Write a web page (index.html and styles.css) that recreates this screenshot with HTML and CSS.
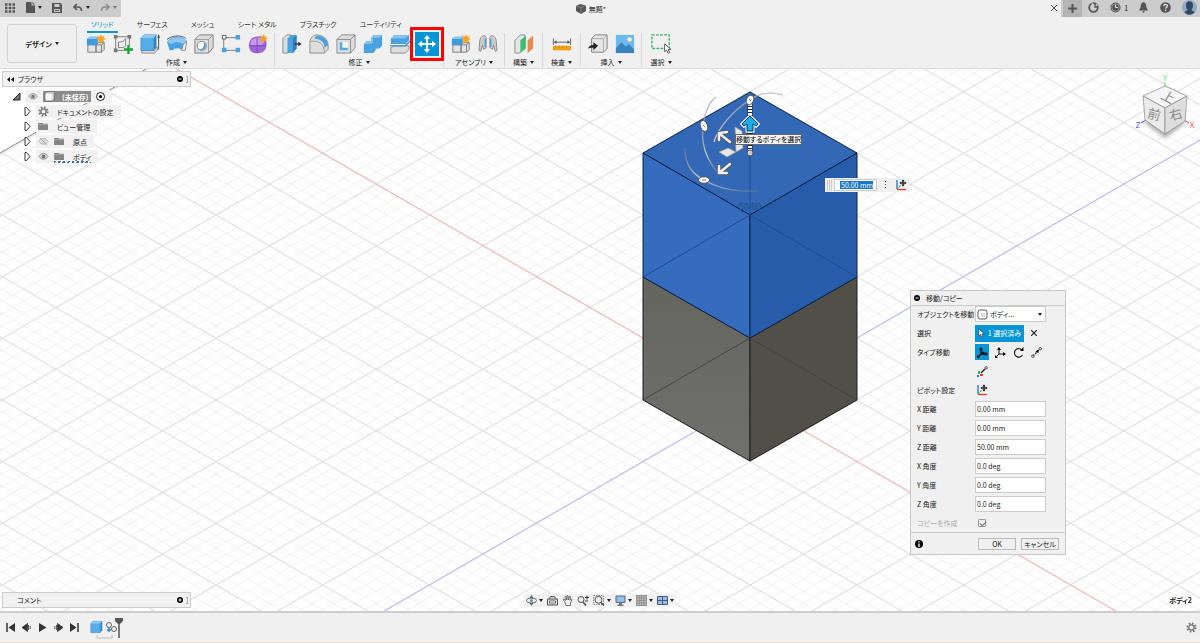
FILE: index.html
```html
<!DOCTYPE html>
<html lang="ja">
<head>
    <meta charset="UTF-8">
    <meta name="viewport" content="width=device-width, initial-scale=1.0">
    <title>無題*</title>
    <link rel="stylesheet" href="styles.css">
</head>
<body>
    <!-- shared icons -->
    <svg class="sprite" width="0" height="0" aria-hidden="true">
        <symbol id="star" viewBox="0 0 12 12"><path d="M6 0l1.200 3.200L10.500 1.500 8.800 4.800 12 6 8.800 7.200l1.700 3.300-3.300-1.700L6 12 4.800 8.800 1.500 10.500l1.700-3.300L0 6l3.200-1.200L1.500 1.500l3.300 1.700z" fill="#f6a21b"/></symbol>
        <symbol id="i-component" viewBox="0 0 22 22">
            <path d="M2 12h9v8H2zM11 12l3-2.500h6V17l-3 3h-6z" fill="#e4e4e4" stroke="#777"/>
            <path d="M11 12h6v8M17 12l3-2.500" fill="none" stroke="#777"/>
            <path d="M1 5.500L4 3h9v6.500L11 12H1z" fill="#3d9ae0"/><path d="M1 5.500L4 3h9l-2 2.500z" fill="#85c8f3"/>
            <use href="#star" x="11" y="0" width="11" height="11"/>
        </symbol>
        <symbol id="i-body" viewBox="0 0 20 22">
            <path d="M1 5.500L5 2h14l-3 3.500V20H1z" fill="#56aee9" stroke="#2b7ab8" stroke-width=".6"/>
            <path d="M1 5.500L5 2h14l-3 3.500z" fill="#8ccbf4"/><path d="M16 5.500L19 2v14l-3 4z" fill="#2f82c5"/>
        </symbol>
        <symbol id="i-folder" viewBox="0 0 12 10"><path d="M0 1h5l1 1h5v7H0z" fill="#858585"/><path d="M0 3h11" stroke="#b5b5b5" stroke-width=".7"/></symbol>
        <symbol id="i-eye" viewBox="0 0 12 10"><path d="M1 5c2.500-4.500 7.500-4.500 10 0-2.500 4-7.500 4-10 0z" fill="#ddd" stroke="#888"/><circle cx="6" cy="5" r="2.200" fill="#777"/></symbol>
        <symbol id="i-gear" viewBox="0 0 14 14"><circle cx="7" cy="7" r="5" fill="none" stroke="#777" stroke-width="3" stroke-dasharray="1.960 1.960"/><circle cx="7" cy="7" r="3.300" fill="#eee" stroke="#777" stroke-width="1.600"/></symbol>
        <symbol id="i-pivot" viewBox="0 0 12 12"><path d="M2 1v9" stroke="#1b6fd0" stroke-width="1.300"/><path d="M2 10.500h9" stroke="#e33" stroke-width="1.300"/><path d="M2 10l4-4" stroke="#3b4" stroke-width="1.300" stroke-dasharray="2 1"/><path d="M8 1.500v5M5.500 4h5" stroke="#111" stroke-width="1.200"/><path d="M8 .5l1.500 1.800h-3zM8 7.500L6.500 5.700h3zM4.500 4l1.800-1.500v3zM11.500 4L9.700 2.500v3z" fill="#111"/></symbol>
        <symbol id="i-cursor" viewBox="0 0 10 14"><path d="M1 1v10l2.500-2 1.800 4 2-1-1.800-3.700L9 8z" fill="#fff" stroke="#333"/></symbol>
        <symbol id="i-doc" viewBox="0 0 12 12"><path d="M1 3l2-2h8v8l-2 2H1z" fill="#f8f8f8" stroke="#666"/><path d="M1 3h8v8M9 3l2-2" fill="none" stroke="#bbb" stroke-width=".7"/></symbol>
        <symbol id="i-plus" viewBox="0 0 10 10"><path d="M5 1v8M1 5h8" stroke="#555" stroke-width="1.800"/></symbol>
    </svg>

    <header class="titlebar">
        <div class="quick">
            <button aria-label="データ パネル"><svg width="10" height="10" viewBox="0 0 10 10"><path d="M0 1.500h10M0 5h10M0 8.500h10" stroke="#555" stroke-width="2.400" stroke-dasharray="2.500 1.250"/></svg></button>
            <button class="drop" aria-label="ファイル"><svg width="9" height="11" viewBox="0 0 9 11"><path d="M0 0h5.500v3.500H9V11H0z" fill="#555"/><path d="M6.500 0L9 2.500H6.500z" fill="#555"/></svg></button>
            <button aria-label="保存"><svg width="10" height="10" viewBox="0 0 10 10"><path d="M0 0h8.500L10 1.500V10H0z" fill="#555"/><path d="M2.500 1h5v3h-5zM2 6h6v3H2z" fill="#ccc"/><path d="M3 7.500h4" stroke="#555"/></svg></button>
            <button class="drop" aria-label="元に戻す"><svg width="10" height="9" viewBox="0 0 10 9"><path d="M4 1L1 4l3 3M1 4h4c2.500 0 3.500 1.500 3.500 4" fill="none" stroke="#555" stroke-width="1.600"/></svg></button>
            <button class="drop faded" aria-label="やり直し"><svg width="10" height="9" viewBox="0 0 10 9"><path d="M6 1l3 3-3 3M9 4H5C2.500 4 1.500 5.500 1.500 8" fill="none" stroke="#555" stroke-width="1.600"/></svg></button>
        </div>
        <div class="doc-tab">
            <svg width="10" height="10" viewBox="0 0 10 10"><path d="M0 2l4-2 6 1.500V7L5 10 0 7z" fill="#555"/><path d="M0 2l5 1.500v6.500M5 3.500l5-2" fill="none" stroke="#999" stroke-width=".7"/></svg>
            <span>無題*</span>
            <button class="close" aria-label="閉じる"><svg width="6" height="6" viewBox="0 0 6 6"><path d="M0 0l6 6M6 0L0 6" stroke="#444"/></svg></button>
        </div>
        <button class="new-tab" aria-label="新規"><svg width="11" height="11"><use href="#i-plus"/></svg></button>
        <div class="account">
            <button aria-label="拡張機能"><svg width="11" height="11" viewBox="0 0 11 11"><circle cx="5.500" cy="5.500" r="4.300" fill="none" stroke="#555" stroke-width="1.800"/><path d="M4 1l2 3 3.500-1.500" fill="none" stroke="#ccc" stroke-width="1.500"/><path d="M7 2v3h3" fill="none" stroke="#555" stroke-width="1.300"/></svg></button>
            <button class="jobs" aria-label="ジョブ ステータス"><svg width="11" height="11" viewBox="0 0 11 11"><circle cx="5.500" cy="5.500" r="5" fill="#555"/><circle cx="5.500" cy="5.500" r="3.800" fill="none" stroke="#aaa" stroke-width=".7"/><path d="M5.500 2.500v3H8" fill="none" stroke="#ddd"/></svg>1</button>
            <button aria-label="通知"><svg width="9" height="11" viewBox="0 0 9 11"><path d="M4.500 0C6.500 1 7.300 2 7.300 5L9 8.500H0L1.700 5c0-3 .8-4 2.800-5zM3 9.300h3L4.500 11z" fill="#555"/></svg></button>
            <button aria-label="ヘルプ"><svg width="11" height="11" viewBox="0 0 11 11"><circle cx="5.500" cy="5.500" r="5.300" fill="#555"/><path d="M3.700 4.200c0-2.400 3.700-2.300 3.700-.2 0 1.300-1.800 1.300-1.800 2.700M5.600 7.800v1.300" fill="none" stroke="#eee" stroke-width="1.200"/></svg></button>
            <button aria-label="アカウント"><svg width="15" height="15" viewBox="0 0 15 15"><circle cx="7.500" cy="7.500" r="7.500" fill="#8fa9c7"/><path d="M4 5c0-5 7-5 7 0 0 3-1 4-1.700 5l3.200 2c-2.500 3.500-7.500 3.500-10 0l3.200-2C5 9 4 8 4 5z" fill="#33475f"/></svg></button>
        </div>
    </header>

    <section class="toolbar">
        <button class="workspace drop">デザイン</button>
        <div class="ribbon">
            <nav class="tabs">
                <a href="#" class="active">ソリッド</a>
                <a href="#">サーフェス</a>
                <a href="#">メッシュ</a>
                <a href="#">シート メタル</a>
                <a href="#">プラスチック</a>
                <a href="#">ユーティリティ</a>
            </nav>
            <div class="groups">
                <div class="group">
                    <div class="tools">
                        <button aria-label="新規コンポーネント"><svg><use href="#i-component"/></svg></button>
                        <button aria-label="スケッチを作成"><svg viewBox="0 0 22 22"><path d="M3 1v18M1 3h19M18 1v12M1 18h11" stroke="#777" fill="none"/><path d="M6 15V9c4 0 6-1 8-4v8c-2 2-4 2-8 2z" fill="none" stroke="#777"/><path d="M1 1h4v4H1zM16 1h4v4h-4zM1 16h4v4H1z" fill="#777"/><path d="M17 12v10M12 17h10" stroke="#1aa33b" stroke-width="2.600"/></svg></button>
                        <button aria-label="押し出し"><svg viewBox="0 0 22 22"><path d="M2 18h14l3-4v4l-3 3H2z" fill="#ddd" stroke="#888"/><use href="#i-body" x="0" y="-1" width="19" height="21"/><path d="M20.500 3v14" stroke="#444"/><path d="M20.500 0l1.500 4h-3z" fill="#444"/></svg></button>
                        <button aria-label="回転"><svg viewBox="0 0 22 22"><path d="M0 9C5 1 16 1 22 8l-3 10h-3c-2-3-7-3-10 0H3z" fill="#4aa2e0"/><path d="M0 9C6 2 16 2 22 8l-5 3C13 8 9 8 5 11z" fill="#8bc9f2"/><path d="M18 11l4-3-2 10h-4z" fill="#eee" stroke="#888"/><path d="M0 6c6-5 16-5 21-1" fill="none" stroke="#555"/></svg></button>
                        <button aria-label="穴"><svg viewBox="0 0 22 22"><path d="M1 6l5-5h15v14l-5 6H1z" fill="#ddd" stroke="#777"/><path d="M1 6h15v15M16 6l5-5" fill="none" stroke="#999"/><circle cx="8.500" cy="13" r="5" fill="#fff" stroke="#777"/><path d="M10 9a5 5 0 01-6 7.500C6 19 13 18 13 13c0-2-1-3-3-4z" fill="#4aa2e0"/></svg></button>
                        <button aria-label="パターン"><svg viewBox="0 0 22 22"><path d="M3 4v14h15M4 4h14" fill="none" stroke="#777"/><path d="M1.500 1.500h4v4h-4z" fill="#fff" stroke="#555"/><path d="M16 1h5v5h-5zM1 15h5v5H1zM16 15h5v5h-5z" fill="#4aa2e0"/></svg></button>
                        <button aria-label="フォームを作成"><svg viewBox="0 0 22 22"><path d="M4 5c5-4 14-3 16 2 1 6 0 11-4 13-5 2-12 2-14-3C0 12 1 8 4 5z" fill="#9f66d6"/><path d="M5 6c4-3 10-3 12 1 1 3 0 5-4 5H3c-1-2 0-4 2-6z" fill="#c79bea"/><path d="M2 13h18M10 4v17" stroke="#7d46b3" fill="none"/><use href="#star" x="12" y="0" width="10" height="10"/></svg></button>
                    </div>
                    <button class="menu drop">作成</button>
                </div>
                <div class="group">
                    <div class="tools">
                        <button aria-label="プレス/プル"><svg viewBox="0 0 22 22"><path d="M1 5l4-4h5v15l-4 5H1z" fill="#ddd" stroke="#888"/><path d="M6 5l4-4h6v15l-4 5H6z" fill="#4aa2e0"/><path d="M12 5l4-4v15l-4 5z" fill="#2f7fc0"/><path d="M14 11h5" stroke="#222" stroke-width="1.300"/><path d="M21.500 11l-3.500-2.500v5z" fill="#222"/></svg></button>
                        <button aria-label="フィレット"><svg viewBox="0 0 22 22"><path d="M1 8c1-4 4-7 8-7 6 0 12 5 12 11v5l-4 4H1z" fill="#ddd" stroke="#888"/><path d="M8 2c6-1 12 3 13 10l-4 3C17 9 13 6 6 5z" fill="#4aa2e0"/><path d="M1 8h5c7 0 11 5 11 13" fill="none" stroke="#999"/></svg></button>
                        <button aria-label="シェル"><svg viewBox="0 0 22 22"><path d="M1 6l5-5h15v14l-5 6H1z" fill="#ddd" stroke="#888"/><path d="M16 6v15M16 6l5-5M1 6h15" fill="none" stroke="#888"/><path d="M4 9h9v9H4z" fill="#f9f9f9"/><path d="M4 9h3v6h6v3H4z" fill="#56a9e2"/></svg></button>
                        <button aria-label="結合"><svg viewBox="0 0 22 22"><path d="M1 11l3-3h5V4l3-3h9v12l-3 3h-4v2l-3 3H1z" fill="#4aa2e0"/><path d="M1 11l3-3h5V4l3-3h9l-3 3h-7v5l-2 2z" fill="#83c4ef"/></svg></button>
                        <button aria-label="面をオフセット"><svg viewBox="0 0 22 22"><path d="M1 5l4-4h16v6l-4 4H1z" fill="#4aa2e0"/><path d="M1 5l4-4h16l-4 4z" fill="#83c4ef"/><path d="M1 15l4-2h16v4l-4 4H1z" fill="#ddd" stroke="#888"/><path d="M0 13h17l5-5" fill="none" stroke="#3d93d5" stroke-width="1.500"/></svg></button>
                        <button class="move" aria-label="移動/コピー"><svg viewBox="0 0 22 22"><path d="M11 4v14M4 11h14" stroke="#fff" stroke-width="2"/><path d="M11 1l3.500 4.500h-7zM11 21l-3.500-4.500h7zM1 11l4.500-3.500v7zM21 11l-4.500-3.500v7z" fill="#fff"/></svg></button>
                    </div>
                    <button class="menu drop">修正</button>
                </div>
                <div class="group">
                    <div class="tools">
                        <button aria-label="コンポーネント"><svg><use href="#i-component"/></svg></button>
                        <button aria-label="ジョイント"><svg viewBox="0 0 22 22"><path d="M2 7c1-5 6-7 7-3v11l-3 2-1-5-2 7-2-1zM20 7c-1-5-6-7-7-3v11l3 2 1-5 2 7 2-1z" fill="#ccc" stroke="#888"/><path d="M8 5v9M14 5v9" stroke="#4aa2e0" stroke-width="1.500"/></svg></button>
                    </div>
                    <button class="menu drop">アセンブリ</button>
                </div>
                <div class="group">
                    <div class="tools"><button aria-label="平面"><svg viewBox="0 0 22 22"><path d="M1 7l6-6h5v14l-6 6H1z" fill="#e5e5e5" stroke="#888"/><path d="M7 7l6-5v14l-6 5z" fill="#3fbd73"/><path d="M15 7l6-5v14l-6 5z" fill="#e58a55"/></svg></button></div>
                    <button class="menu drop">構築</button>
                </div>
                <div class="group">
                    <div class="tools"><button aria-label="計測"><svg viewBox="0 0 22 22"><path d="M1.500 5v7M20.500 5v7M3 9h16" stroke="#555" fill="none"/><path d="M2 9l3-2v4zM20 9l-3-2v4z" fill="#555"/><path d="M1 13h20v5H1z" fill="#f5a01b"/><path d="M4 13v2M8 13v2M12 13v2M16 13v2" stroke="#c07c10"/></svg></button></div>
                    <button class="menu drop">検査</button>
                </div>
                <div class="group">
                    <div class="tools">
                        <button aria-label="派生を挿入"><svg viewBox="0 0 22 22"><path d="M4 5l4-4h13v15l-4 4H4z" fill="#e5e5e5" stroke="#777"/><path d="M4 5h13v15M17 5l4-4" fill="none" stroke="#aaa"/><path d="M0 16c1-3 3-4 6-4V9l5 4-5 5v-3c-3 0-4 0-6 1z" fill="#222"/></svg></button>
                        <button aria-label="キャンバス"><svg viewBox="0 0 22 22"><path d="M1 1h20v20H1z" fill="#6db9ee"/><path d="M1 16l6-7 5 5 3-3 6 6v4H1z" fill="#3783bd"/><circle cx="16" cy="6" r="2.500" fill="#fff4ba"/></svg></button>
                    </div>
                    <button class="menu drop">挿入</button>
                </div>
                <div class="group">
                    <div class="tools"><button aria-label="ウィンドウ選択"><svg viewBox="0 0 22 22"><path d="M1 1h19v15H1z" fill="none" stroke="#37b661" stroke-width="1.500" stroke-dasharray="3 1.500"/><use href="#i-cursor" x="14" y="10" width="9" height="12"/></svg></button></div>
                    <button class="menu drop">選択</button>
                </div>
            </div>
        </div>
    </section>

    <main class="viewport">
        <svg class="canvas" viewBox="0 69 1200 542" preserveAspectRatio="xMidYMid slice">
            <defs>
                <!-- both patterns start at the origin point 750,400 -->
                <pattern id="minor" x="750" y="400" width="21.360" height="12.332" patternUnits="userSpaceOnUse">
                    <path d="M0 0l21.360 12.332M0 12.332L21.360 0" stroke="#ececec" stroke-width=".8"/>
                </pattern>
                <pattern id="major" x="750" y="400" width="106.800" height="61.660" patternUnits="userSpaceOnUse">
                    <path d="M0 0l106.800 61.660M0 61.660L106.800 0" stroke="#d9d9d9" stroke-width=".9"/>
                </pattern>
                <linearGradient id="cubeLeft" x1="0" y1="0" x2="0" y2="1"><stop offset="0" stop-color="#64655f"/><stop offset="1" stop-color="#70716c"/></linearGradient>
                <linearGradient id="arc" x1="0" y1="0" x2="1" y2="1"><stop offset="0" stop-color="#888" stop-opacity=".5"/><stop offset=".5" stop-color="#ccc"/><stop offset="1" stop-color="#888" stop-opacity=".4"/></linearGradient>
            </defs>
            <g>
                <path d="M0 153L146 69h1054v542H0z" fill="url(#minor)"/>
                <path d="M0 153L146 69h1054v542H0z" fill="url(#major)"/>
            </g>
            <path d="M0 153L146 69" stroke="#888"/>
            <path d="M177 69l939 542" stroke="#ffaeae"/>
            <path d="M384 611L1200 140" stroke="#b4b4ff"/>

            <g stroke="#1c1c1c" stroke-linejoin="round">
                <path d="M643 277l107 61v123l-107-61z" fill="url(#cubeLeft)"/>
                <path d="M857 277l-107 61v123l107-61z" fill="#524f48"/>
                <g stroke="#0b2346">
                    <path d="M750 92l107 61-107 62-107-62z" fill="#3268b5"/>
                    <path d="M643 153l107 62v123l-107-61z" fill="#356cbd"/>
                    <path d="M857 153l-107 62v123l107-61z" fill="#275caa"/>
                </g>
            </g>
            <path d="M643 277l107-62 107 62M750 153v62" fill="none" stroke="#174a94" stroke-width=".9"/>
            <path d="M643 400l107-62 107 62" fill="none" stroke="#43423d" stroke-width=".9"/>
            <text x="750" y="210" class="dimension" text-anchor="middle">50.00</text>

            <!-- move manipulator -->
            <g fill="none" stroke="url(#arc)" stroke-width="1.400">
                <path d="M783 95c-10-3-23-3-33 5-14 8-32 27-36 42"/>
                <path d="M716 97c-10 7-15 27-13 45 2 13 9 24 15 31"/>
                <path d="M685 148c0 18 8 26 19 32 13 8 31 12 53 11"/>
            </g>
            <path d="M750 104v47" stroke="#222" stroke-width="5"/>
            <path d="M750 104v47" stroke="#fff" stroke-width="4" stroke-dasharray="2 1"/>
            <path d="M735 127l7 4 1 17-7 4zM728 148l8 4-9 5-8-5z" fill="#e6e6e6" stroke="#999" stroke-width=".7"/>
            <g fill="#fff" stroke="#555">
                <ellipse cx="750" cy="100" rx="3.500" ry="5" transform="rotate(25 750 100)"/>
                <ellipse cx="704" cy="126" rx="3.500" ry="5.500" transform="rotate(-20 704 126)"/>
                <ellipse cx="704" cy="180" rx="5.500" ry="3.200"/>
                <circle cx="750" cy="153" r="3" fill="#ccc"/>
            </g>
            <path d="M749 99l2 2M703 125l2 2M702 180h4" stroke="#777"/>
            <g fill="none" stroke-linecap="round">
                <path d="M730 142l-10-8M719 140v-7l8-1M730 164l-11 9M719 166v7h8" stroke="#555" stroke-width="4"/>
                <path d="M730 142l-10-8M719 140v-7l8-1M730 164l-11 9M719 166v7h8" stroke="#eee" stroke-width="2.500"/>
            </g>
            <path d="M750 116l8 8-2 2-3-2v7h-6v-7l-3 2-2-2z" fill="#16aef0" stroke="#fff" stroke-width="3"/>
            <path d="M750 116l8 8-2 2-3-2v7h-6v-7l-3 2-2-2z" fill="#16aef0" stroke="#053c5c"/>
        </svg>

        <div class="tooltip">移動するボディを選択</div>
        <div class="floating">
            <span class="grip"></span>
            <input type="text" value="50.00 mm" aria-label="距離">
            <button class="dots" aria-label="メニュー"></button>
            <button aria-label="ピボット"><svg width="12" height="12"><use href="#i-pivot"/></svg></button>
        </div>

        <svg class="viewcube" width="66" height="72" viewBox="1132 70 66 72">
            <defs><filter id="soft"><feGaussianBlur stdDeviation="2"/></filter></defs>
            <path d="M1144 122l21 16 21-16-21-8z" fill="#aaa" filter="url(#soft)"/>
            <path d="M1165 82v5" stroke="#4e4"/><path d="M1146 120l-5 3" stroke="#44e"/><path d="M1184 120l5 3" stroke="#e44"/>
            <g stroke="#888" stroke-width=".7" stroke-linejoin="round">
                <path d="M1165 86l22 10-22 12-22-12z" fill="#f5f5f5"/>
                <path d="M1143 96l22 12v26l-20-14z" fill="#eaeaea"/>
                <path d="M1187 96l-22 12v26l20-13z" fill="#dedede"/>
            </g>
            <g class="face" text-anchor="middle">
                <text transform="translate(1166 101) rotate(28)">上</text>
                <text transform="translate(1153 119) rotate(14)">前</text>
                <text transform="translate(1177 119) rotate(-16)">右</text>
            </g>
            <g class="axis" text-anchor="middle">
                <text x="1165" y="81" fill="#5fe35f">Y</text>
                <text x="1138" y="128" fill="#5555ee">Z</text>
                <text x="1192" y="128" fill="#ee5555">X</text>
            </g>
        </svg>

        <aside class="browser">
            <div class="panel-bar">
                <svg width="7" height="5" viewBox="0 0 7 5"><path d="M3 0v5L0 2.500zM7 0v5L4 2.500z" fill="#111"/></svg>
                <span>ブラウザ</span>
                <button class="round" aria-label="最小化"><svg width="6" height="6" viewBox="0 0 6 6"><circle cx="3" cy="3" r="3"/><path d="M1.500 3h3" stroke="#fff"/></svg></button>
                <i class="handle"></i>
            </div>
            <ul class="tree">
                <li class="root">
                    <svg width="9" height="9" viewBox="0 0 9 9"><path d="M8 1v7H1z" fill="#777" stroke="#222"/></svg>
                    <div class="node">
                        <svg width="10" height="9"><use href="#i-eye"/></svg>
                        <span class="doc"><svg width="11" height="11"><use href="#i-doc"/></svg>(未保存)</span>
                        <svg width="9" height="9" viewBox="0 0 9 9"><circle cx="4.500" cy="4.500" r="4" fill="#fff" stroke="#222"/><circle cx="4.500" cy="4.500" r="1.600"/></svg>
                    </div>
                </li>
                <li>
                    <svg class="arrow" viewBox="0 0 6 9"><path d="M.5.500v8h1.500l3.500-4L2 .5z" fill="#fff" stroke="#333"/></svg>
                    <div class="node"><svg width="11" height="11"><use href="#i-gear"/></svg><span>ドキュメントの設定</span></div>
                </li>
                <li>
                    <svg class="arrow" viewBox="0 0 6 9"><path d="M.5.500v8h1.500l3.500-4L2 .5z" fill="#fff" stroke="#333"/></svg>
                    <div class="node"><svg width="11" height="9"><use href="#i-folder"/></svg><span>ビュー管理</span></div>
                </li>
                <li>
                    <svg class="arrow" viewBox="0 0 6 9"><path d="M.5.500v8h1.500l3.500-4L2 .5z" fill="#fff" stroke="#333"/></svg>
                    <div class="node"><svg width="11" height="9" viewBox="0 0 12 10"><path d="M1 5c2.500-4.500 7.500-4.500 10 0-2.500 4-7.500 4-10 0zM2 1l8 8" fill="none" stroke="#aaa"/><circle cx="6" cy="5" r="1.800" fill="none" stroke="#aaa"/></svg><svg width="11" height="9"><use href="#i-folder"/></svg><span>原点</span></div>
                </li>
                <li>
                    <svg class="arrow" viewBox="0 0 6 9"><path d="M.5.500v8h1.500l3.500-4L2 .5z" fill="#fff" stroke="#333"/></svg>
                    <div class="node"><svg width="11" height="9"><use href="#i-eye"/></svg><div class="hatched"><svg width="11" height="9"><use href="#i-folder"/></svg><span>ボディ</span></div></div>
                </li>
            </ul>
        </aside>

        <form class="dialog">
            <h2><svg width="6" height="6" viewBox="0 0 6 6"><circle cx="3" cy="3" r="3"/><path d="M1.500 3h3" stroke="#fff"/></svg>移動/コピー</h2>
            <div class="fields">
                <label for="target">オブジェクトを移動</label>
                <div class="select">
                    <svg width="11" height="11" viewBox="0 0 11 11"><rect x="1" y="1" width="9" height="9" rx="2" fill="#fff" stroke="#556"/><path d="M4 4h4v4H4z" fill="#ddd"/></svg>
                    <select id="target"><option>ボディ...</option></select>
                </div>
                <span>選択</span>
                <div class="row">
                    <button type="button" class="picked"><svg width="7" height="10"><use href="#i-cursor"/></svg>1 選択済み</button>
                    <button type="button" class="clear" aria-label="選択を解除"><svg width="6" height="6" viewBox="0 0 6 6"><path d="M0 0l6 6M6 0L0 6" stroke="#222" stroke-width="1.200"/></svg></button>
                </div>
                <span class="type-label">タイプ移動</span>
                <div class="types">
                    <button type="button" class="on" aria-label="自由移動"><svg viewBox="0 0 11 11"><path d="M4 2v5h6M4 7L1 10" fill="none" stroke="#111" stroke-width="1.300"/><path d="M4 0l2 3H2zM11 7L8 5v4zM0 11V8l3 3z"/><circle cx="6" cy="6" r="1.500"/></svg></button>
                    <button type="button" aria-label="平行移動"><svg viewBox="0 0 11 11"><path d="M4 2v5h6M4 7L1 10" fill="none" stroke="#111"/><path d="M4 0l2 3H2zM11 7L8 5v4zM0 11V8l3 3z"/></svg></button>
                    <button type="button" aria-label="回転"><svg viewBox="0 0 11 11"><path d="M9 3a4.300 4.300 0 10.500 5" fill="none" stroke="#222" stroke-width="1.200"/><path d="M10.500 0v4H7z"/></svg></button>
                    <button type="button" aria-label="点から点"><svg viewBox="0 0 11 11"><path d="M2 9l6-6" stroke="#222" stroke-width="1.300" stroke-dasharray="2 1"/><circle cx="1.800" cy="9.200" r="1.200" fill="#fff" stroke="#222" stroke-width=".8"/><circle cx="9.200" cy="1.800" r="1.200" fill="#fff" stroke="#222" stroke-width=".8"/><path d="M7.500 6V2.500l-3 2z"/></svg></button>
                    <button type="button" aria-label="点から位置"><svg viewBox="0 0 11 11"><path d="M4 7l4-4" stroke="#222" stroke-width="1.400"/><circle cx="9.200" cy="1.800" r="1.200" fill="#fff" stroke="#222" stroke-width=".8"/><path d="M1 5h2v3H1z" fill="#3b4"/><path d="M3 8h3v2H3z" fill="#e33"/><path d="M0 9h2v2H0z" fill="#27d"/></svg></button>
                </div>
                <span>ピボット設定</span>
                <button type="button" class="pivot" aria-label="ピボット設定"><svg width="12" height="12"><use href="#i-pivot"/></svg></button>
                <label for="dx">X 距離</label><input id="dx" type="text" value="0.00 mm">
                <label for="dy">Y 距離</label><input id="dy" type="text" value="0.00 mm">
                <label for="dz">Z 距離</label><input id="dz" type="text" value="50.00 mm">
                <label for="ax">X 角度</label><input id="ax" type="text" value="0.0 deg">
                <label for="ay">Y 角度</label><input id="ay" type="text" value="0.0 deg">
                <label for="az">Z 角度</label><input id="az" type="text" value="0.0 deg">
                <label for="copy" class="disabled">コピーを作成</label><input id="copy" type="checkbox" checked disabled>
            </div>
            <footer>
                <svg width="8" height="8" viewBox="0 0 8 8"><circle cx="4" cy="4" r="4"/><path d="M4 3.500V7M4 1.200v1.300" stroke="#fff" stroke-width="1.300"/></svg>
                <button type="button">OK</button>
                <button type="button">キャンセル</button>
            </footer>
        </form>

        <div class="comments panel-bar">
            <span>コメント</span>
            <button class="round" aria-label="コメントを追加"><svg width="6" height="6" viewBox="0 0 6 6"><circle cx="3" cy="3" r="3"/><path d="M1.500 3h3M3 1.500v3" stroke="#fff"/></svg></button>
            <i class="handle"></i>
        </div>

        <div class="navbar">
            <button class="drop" aria-label="オービット"><svg width="11" height="11" viewBox="0 0 11 11"><path d="M5.500 0l2 3h-4zM5.500 11l-2-3h4z" fill="#666"/><ellipse cx="5.500" cy="5.500" rx="5" ry="2.300" fill="none" stroke="#666"/><circle cx="5.500" cy="5.500" r="1.500" fill="#3d9ae0"/></svg></button>
            <button aria-label="ビュー正面"><svg width="11" height="11" viewBox="0 0 11 11"><path d="M.5 4h10v6H.5zM2 4l1.500-2.500h4L9 4" fill="#ddd" stroke="#555"/><path d="M2.500 6h6v2h-6z" fill="#fff" stroke="#555" stroke-width=".8"/></svg></button>
            <button aria-label="画面移動"><svg width="11" height="11" viewBox="0 0 11 11"><path d="M3 7L1 4.500l1-.5 1.500 1.500L3 1.500l1-.3L5 5V.6h1L6.500 5l1-3.800 1 .2L8 5.500l1-1.500 1 .5L8.500 8v2.500H4z" fill="#fff" stroke="#555" stroke-width=".8"/></svg></button>
            <button aria-label="ズーム"><svg width="12" height="11" viewBox="0 0 12 11"><circle cx="4" cy="4.500" r="3" fill="#eee" stroke="#555"/><path d="M6 7l3 3.500" stroke="#555" stroke-width="1.700"/><path d="M8 2.500h4M10 .5v4M8 6h3" stroke="#333"/></svg></button>
            <button class="drop" aria-label="ウィンドウ ズーム"><svg width="12" height="11" viewBox="0 0 12 11"><path d="M.5.500h10v9H.5z" fill="none" stroke="#888" stroke-dasharray="1.500 1"/><circle cx="5.500" cy="4.800" r="3.500" fill="#eee" stroke="#555"/><path d="M8 7.500l3 3" stroke="#555" stroke-width="1.700"/></svg></button>
            <button class="drop" aria-label="表示設定"><svg width="11" height="11" viewBox="0 0 11 11"><rect x=".5" y=".5" width="10" height="7.500" rx="1" fill="#667"/><path d="M1.500 1.500h8V7h-8z" fill="#8cc2ec"/><path d="M4 8h3v1.500h1.500V11h-6V9.500H4z" fill="#777"/></svg></button>
            <button class="drop" aria-label="グリッドとスナップ"><svg width="11" height="11" viewBox="0 0 11 11"><path d="M0 0h11v11H0z" fill="#bbb"/><path d="M.5 0v11M3 0v11M5.500 0v11M8 0v11M10.500 0v11M0 .5h11M0 3h11M0 5.500h11M0 8h11M0 10.500h11" stroke="#888" stroke-width=".7"/></svg></button>
            <button class="drop" aria-label="ビューポート"><svg width="11" height="9" viewBox="0 0 11 9"><path d="M.5.500h10v8H.5z" fill="#8fc1e8" stroke="#557"/><path d="M5.500 0v9M0 4.500h11" stroke="#557"/></svg></button>
        </div>
        <div class="status">ボディ2</div>
    </main>

    <footer class="timeline">
        <div class="playback">
            <button aria-label="先頭"><svg viewBox="0 0 9 9"><path d="M9 0L2.500 4.500 9 9z" fill="#333"/><path d="M1 0v9" stroke="#333" stroke-width="1.500"/></svg></button>
            <button aria-label="戻る"><svg viewBox="0 0 9 9"><path d="M5.500.500v8L0 4.500zM6.500 2v5M8.200 3v3" fill="#333" stroke="#333" stroke-width=".8"/></svg></button>
            <button aria-label="再生"><svg viewBox="0 0 9 9"><path d="M1 0l7.500 4.500L1 9z" fill="#333"/></svg></button>
            <button aria-label="進む"><svg viewBox="0 0 9 9"><path d="M3.500.500v8L9 4.500zM2.500 2v5M.8 3v3" fill="#333" stroke="#333" stroke-width=".8"/></svg></button>
            <button aria-label="最後"><svg viewBox="0 0 9 9"><path d="M0 0l6.500 4.500L0 9z" fill="#333"/><path d="M8 0v9" stroke="#333" stroke-width="1.500"/></svg></button>
        </div>
        <svg class="history" width="34" height="22" viewBox="90 616 34 22">
            <use href="#i-body" x="90" y="619" width="13" height="14"/>
            <path d="M97 634v3h15v-3" fill="none" stroke="#bbb"/>
            <circle cx="109" cy="624" r="2.500" fill="#eee" stroke="#666"/><circle cx="114" cy="628" r="2.500" fill="#eee" stroke="#666"/><path d="M109 627v4M107 629h4" stroke="#2a83cf" stroke-width="1.300"/>
            <path d="M115 617h8v3l-3 3h-2l-3-3z" fill="#555"/><path d="M119 622v15" stroke="#555" stroke-width="1.500"/>
        </svg>
        <button class="settings" aria-label="設定"><svg width="11" height="11"><use href="#i-gear"/></svg></button>
    </footer>
</body>
</html>
```

FILE: styles.css
```css
* {
    box-sizing: border-box;
}
body {
    margin: 0;
    height: 100vh;
    display: flex;
    flex-direction: column;
    overflow: hidden;
    background: #f0f0f0;
    color: #222;
    font-family: "Noto Sans CJK JP", sans-serif;
    font-size: 7px;
    line-height: 10px;
    font-feature-settings: "palt";
}
button, input, select {
    font: inherit;
    font-feature-settings: inherit;
    color: inherit;
    margin: 0;
    padding: 0;
    border: 0;
    background: none;
}
button {
    display: flex;
    align-items: center;
    justify-content: center;
    cursor: pointer;
}
svg {
    display: block;
    flex: none;
}
.sprite {
    position: absolute;
}
/* small caret after drop-down buttons */
.drop::after {
    content: "";
    margin-left: 3px;
    border: 2px solid transparent;
    border-top: 3px solid #222;
    border-bottom: 0;
}

/* title bar */
.titlebar {
    display: flex;
    height: 17px;
    background: #ccc;
}
.quick {
    display: flex;
    align-items: center;
    justify-content: space-between;
    width: 121px;
    padding: 0 4px 2px 5px;
}
.faded {
    opacity: 0.5;
}
.doc-tab {
    flex: 1;
    display: flex;
    align-items: center;
    justify-content: center;
    gap: 3px;
    position: relative;
    background: #f0f0f0;
}
.doc-tab .close {
    position: absolute;
    right: 4px;
    top: 5px;
}
.new-tab {
    width: 19px;
    margin-left: 2px;
    background: #b4b4b4;
}
.account {
    display: flex;
    align-items: center;
    justify-content: space-between;
    width: 118px;
    padding: 0 3px 2px 6px;
}
.jobs {
    gap: 3px;
}

/* toolbar */
.toolbar {
    display: flex;
    height: 52px;
    border-bottom: 1px solid #ddd;
}
.workspace {
    width: 70px;
    height: 39px;
    margin: 7px 2px 0 7px;
    border: 1px solid #d2d2d2;
    border-radius: 3px;
    font-weight: bold;
}
.tabs {
    display: flex;
    gap: 15px;
    padding: 1px 0 0 8px;
}
.tabs a {
    padding: 1px 4px 2px;
    border-bottom: 2px solid transparent;
    color: #333;
    text-decoration: none;
    white-space: nowrap;
}
.tabs .active {
    color: #0696d7;
    border-color: #0696d7;
}
.groups {
    display: flex;
}
.group {
    display: flex;
    flex-direction: column;
    align-items: center;
    min-width: 38px;
    height: 34px;
    padding: 0 3px;
    border-right: 1px solid #d8d8d8;
}
.group:last-child {
    border: 0;
}
.tools {
    display: flex;
}
.tools button {
    width: 27px;
    height: 22px;
}
.tools svg {
    width: 20px;
    height: 20px;
}
.tools .move {
    width: 34px;
    height: 34px;
    margin: -6px -4px -6px -3px;
    border: 3px solid #f00;
    background: #0696d7;
    box-shadow: inset 0 0 0 2px #f0f0f0;
}
.menu {
    height: 11px;
    margin-top: 2px;
}

/* canvas area */
.viewport {
    flex: 1;
    position: relative;
    min-height: 0;
    background: #fff;
}
.canvas {
    position: absolute;
    width: 100%;
    height: 100%;
}
.dimension {
    font-size: 9px;
    fill: #1d4d93;
}
.face {
    font-size: 13px;
    fill: #888;
}
.axis {
    font-size: 8px;
}
.viewcube {
    position: absolute;
    top: 1px;
    right: 2px;
}
.tooltip {
    position: absolute;
    top: 65px;
    left: calc(50% + 135px);
    background: #f7f7f7;
    border: 1px solid #666;
    line-height: 9px;
    white-space: nowrap;
    color: #000;
}
.floating {
    position: absolute;
    top: 109px;
    left: calc(50% + 225px);
    display: flex;
    align-items: center;
    width: 84px;
    height: 14px;
    background: #f0f0f0;
}
.floating input {
    width: 43px;
    height: 12px;
    padding: 0 2px 0 6px;
    border: 1px solid #ccc;
    color: #fff;
    background: linear-gradient(#1976c8, #1976c8) 5px 1px / 33px 8px no-repeat #fff;
}
.grip {
    width: 5px;
    height: 11px;
    margin: 0 2px;
    background: repeating-linear-gradient(90deg, #ccc 0 1px, #f0f0f0 1px 2px);
}
.dots {
    width: 1px;
    height: 8px;
    margin: 0 9px 0 8px;
    background: repeating-linear-gradient(#444 0 1px, transparent 1px 3px);
}

/* browser */
.browser {
    position: absolute;
    top: 2px;
    left: 2px;
}
.panel-bar {
    display: flex;
    align-items: center;
    width: 189px;
    height: 16px;
    padding: 0 2px 0 4px;
    background: #f1f1f1;
    border: 1px solid #ccc;
}
.panel-bar span {
    margin-left: 4px;
}
.round {
    margin-left: auto;
}
.handle {
    width: 2px;
    height: 7px;
    margin-left: 3px;
    border: 1px solid #aaa;
    border-left: 0;
}
.tree {
    margin: 2px 0 0;
    padding: 0 0 0 22px;
    list-style: none;
}
.tree li {
    display: flex;
    align-items: center;
    gap: 5px;
    height: 15px;
}
.tree .root {
    margin-left: -12px;
}
.arrow {
    width: 7px;
    height: 9px;
}
.node, .hatched {
    display: flex;
    align-items: center;
    gap: 5px;
}
.node {
    height: 13px;
    padding: 0 7px 0 2px;
    background: #f1f1f1;
}
.node span {
    margin-left: 3px;
}
.node .doc {
    display: flex;
    align-items: center;
    gap: 7px;
    height: 11px;
    margin: 0;
    padding: 0 3px 0 1px;
    background: #8c8c8c;
    color: #fff;
    font-weight: bold;
}
.hatched {
    height: 13px;
    background: repeating-linear-gradient(120deg, #44699a 0 2px, transparent 2px 4px) 0 100% / 100% 2px no-repeat;
}

/* move dialog */
.dialog {
    position: absolute;
    top: 221px;
    right: 134px;
    width: 156px;
    background: #f0f0f0;
    border: 1px solid #c8c8c8;
}
.dialog h2 {
    display: flex;
    align-items: center;
    gap: 6px;
    height: 15px;
    margin: 0;
    padding-left: 3px;
    border-bottom: 1px solid #ccc;
    font-size: 7px;
    font-weight: normal;
}
.fields {
    display: grid;
    grid-template-columns: 58px 71px;
    grid-auto-rows: 16px;
    row-gap: 3px;
    align-items: center;
    padding: 0 0 1px 6px;
}
.fields > label, .fields > span {
    white-space: nowrap;
}
.fields input[type="text"], .select {
    width: 100%;
    height: 16px;
    padding: 0 1px;
    border: 1px solid #ccc;
    background: #fff;
}
.select {
    display: flex;
    align-items: center;
    gap: 2px;
}
.select::after {
    content: "";
    margin-right: 2px;
    border: 2px solid transparent;
    border-top: 3px solid #222;
    border-bottom: 0;
}
.select select {
    flex: 1;
    min-width: 0;
    appearance: none;
}
.row {
    display: flex;
    align-items: center;
}
.picked {
    width: 49px;
    height: 17px;
    gap: 3px;
    background: #0696d7;
    color: #fff;
    white-space: nowrap;
}
.clear {
    margin-left: 7px;
}
.types {
    grid-row: span 2;
    display: flex;
    flex-wrap: wrap;
    gap: 3px 4px;
}
.types button {
    width: 14px;
    height: 16px;
}
.types svg {
    width: 11px;
    height: 11px;
}
.types .on {
    background: #0696d7;
}
.type-label {
    grid-row: span 2;
    align-self: start;
    margin-top: 3px;
}
.pivot {
    width: 14px;
}
.disabled {
    color: #aaa;
}
.fields input[type="checkbox"] {
    appearance: none;
    width: 8px;
    height: 8px;
    margin-left: 3px;
    border: 1px solid #999;
    border-radius: 1px;
}
.fields input:checked::before {
    content: "";
    display: block;
    width: 5px;
    height: 3px;
    margin: 1px 0 0 1px;
    border: solid #777;
    border-width: 0 0 1px 1px;
    transform: rotate(-45deg);
}
.dialog footer {
    display: flex;
    align-items: center;
    gap: 5px;
    height: 22px;
    padding: 0 6px 0 4px;
    border-top: 1px solid #ccc;
}
.dialog footer svg {
    margin-right: auto;
}
.dialog footer button {
    width: 38px;
    height: 12px;
    border: 1px solid #bbb;
    white-space: nowrap;
}

/* bottom of the canvas */
.comments {
    position: absolute;
    left: 2px;
    bottom: 3px;
}
.comments span {
    margin-left: 10px;
}
.navbar {
    position: absolute;
    bottom: 4px;
    left: 50%;
    transform: translateX(-50%);
    display: flex;
    align-items: center;
    gap: 4px;
    height: 13px;
    padding: 0 2px;
    background: #f1f1f1;
}
.navbar .drop::after {
    margin-left: 2px;
}
.status {
    position: absolute;
    right: 8px;
    bottom: 6px;
    font-weight: bold;
}

/* timeline */
.timeline {
    display: flex;
    align-items: center;
    height: 32px;
    padding: 0 3px 0 6px;
    border-top: 2px solid #ccc;
    border-bottom: 1px solid #ecdcc6;
}
.playback {
    display: flex;
    gap: 7px;
}
.playback svg {
    width: 9px;
    height: 9px;
}
.history {
    margin-left: 11px;
}
.settings {
    margin-left: auto;
}
```
